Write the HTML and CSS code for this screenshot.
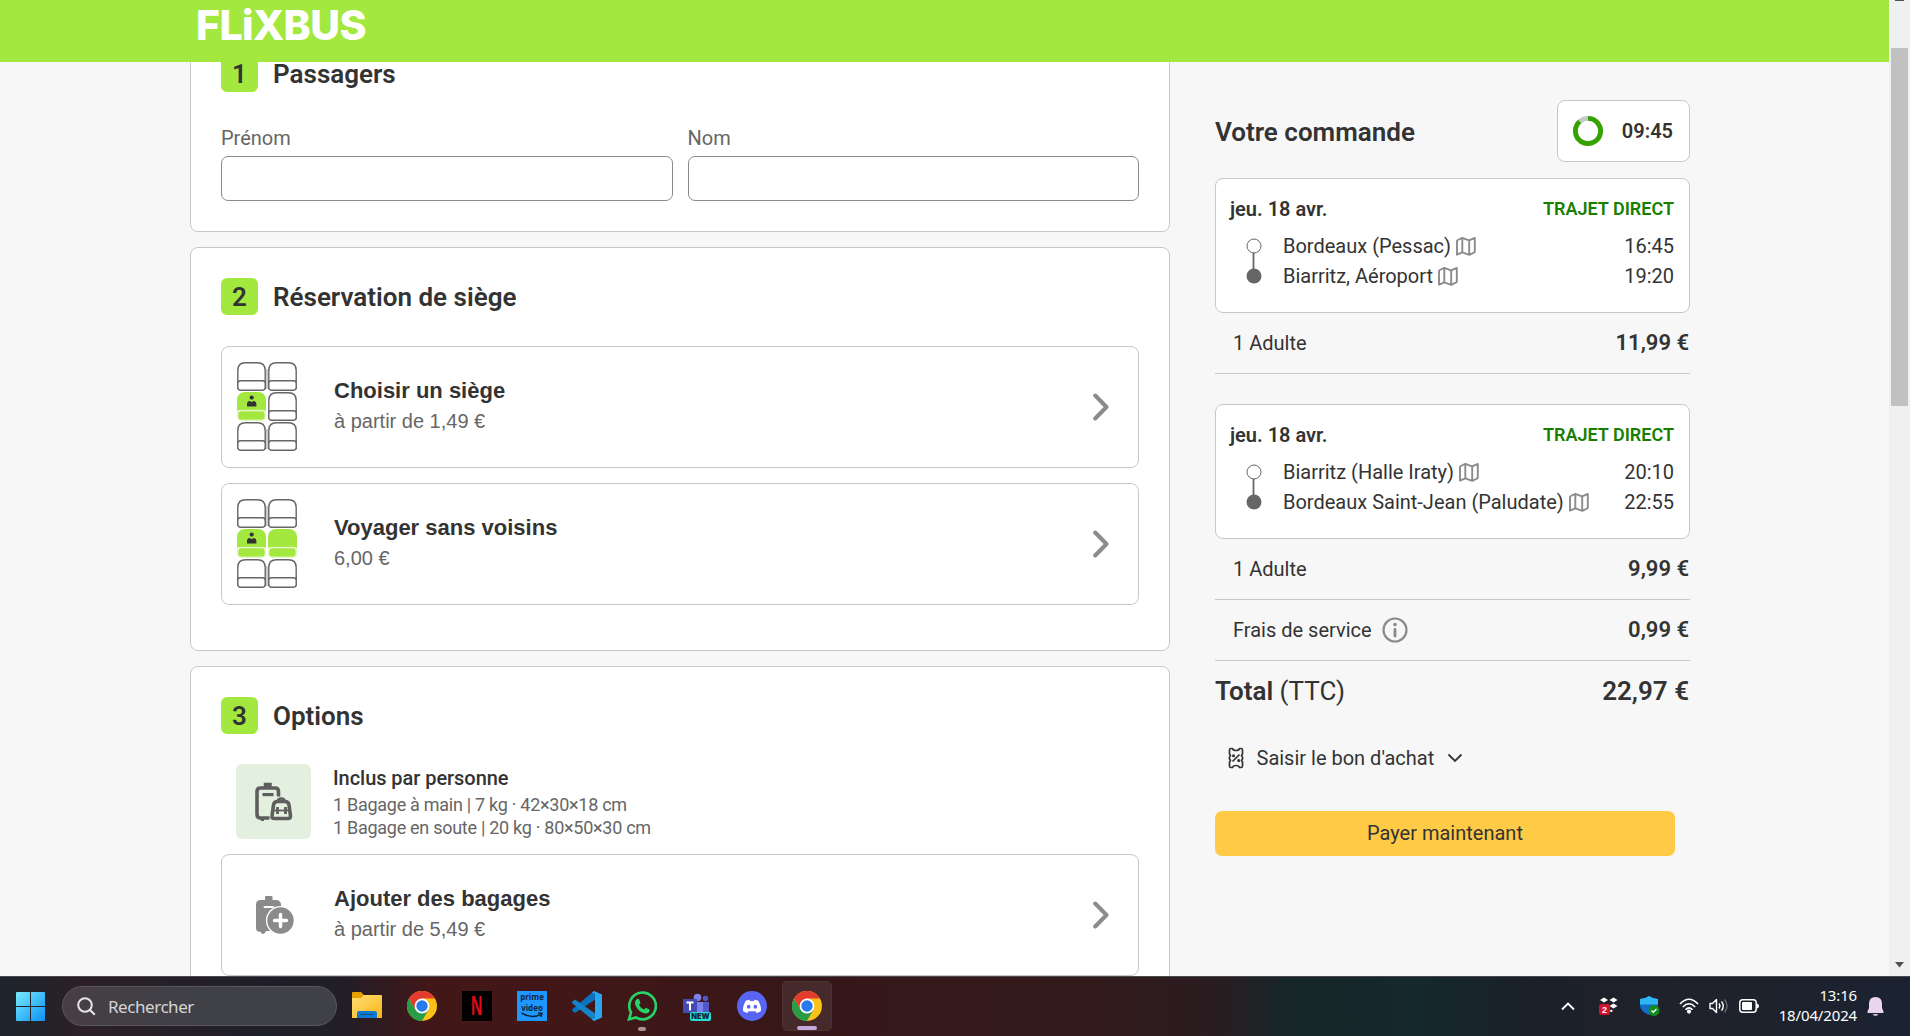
FILE: index.html
```html
<!DOCTYPE html>
<html lang="fr">
<head>
<meta charset="utf-8">
<title>FlixBus – Réservation</title>
<link rel="stylesheet" href="styles.css">
</head>
<body>
<svg class="defs" width="0" height="0" aria-hidden="true">
  <defs>
    <g id="seat" fill="#fff" stroke="#666" stroke-width="1.4">
      <path d="M.8 27V8.500Q.8.800 8.500.800H20.500Q28.200.800 28.200 8.500V27"/>
      <rect x=".8" y="18.800" width="27.400" height="9.400" rx="2.600"/>
    </g>
    <g id="seat-on">
      <path fill="#a3e83f" d="M0 20V8.500Q0 0 8.500 0H20.500Q29 0 29 8.500V20Q29 18 26 18H3Q0 18 0 20Z"/>
      <rect fill="#a3e83f" x="1.300" y="19.300" width="26.400" height="8.400" rx="2.600"/>
      <path fill="none" stroke="#d5f5a8" stroke-width=".8" d="M.5 24V21.500Q.5 18.300 3.500 18.300H25.500Q28.500 18.300 28.500 21.500V24Q28.500 28.300 25 28.300H4Q.5 28.300.5 24"/>
    </g>
    <g id="rider" fill="#333">
      <circle cx="14.700" cy="5.600" r="2.100"/>
      <path d="M10 14.500V12Q10 9.200 12.500 8.900L14.700 10L17 8.900Q19.400 9.200 19.400 12V14.500Z"/>
    </g>
    <g id="map" fill="none" stroke="#8b8b8b" stroke-width="1.900" stroke-linejoin="round">
      <path d="M1 17.700V4.200Q1 3.400 1.800 3L6.300.900L13 3.300L18.800 1V14.200Q18.800 15.200 18 15.500L13.300 17.900L6.300 15.300ZM6.300 1V15.300M13.200 3.300V17.800"/>
    </g>
    <g id="chrome">
      <circle cx="15" cy="15" r="15" fill="#fbc116"/>
      <path fill="#e33b2e" d="M2 7.500A15 15 0 0 1 28 7.500H15L8.500 19Z"/>
      <path fill="#2a9c48" d="M2 7.500A15 15 0 0 0 15 30L21.500 18.700L8.500 18.700Z"/>
      <circle cx="15" cy="15" r="7.400" fill="#fff"/>
      <circle cx="15" cy="15" r="5.700" fill="#2879ee"/>
    </g>
    <linearGradient id="win" x1="0" y1="0" x2="1" y2="1"><stop offset="0" stop-color="#7aeaff"/><stop offset="1" stop-color="#0a91f5"/></linearGradient>
    <linearGradient id="fold" x1="0" y1="0" x2="1" y2="1"><stop offset="0" stop-color="#ffdf75"/><stop offset="1" stop-color="#f8b517"/></linearGradient>
  </defs>
</svg>

<div class="browser">
  <div class="page">
    <header class="topbar"><span class="logo">FLiXBUS</span></header>
    <main class="layout">
      <div class="steps">
        <section class="card card-passengers">
          <h2 class="step-title"><span class="step-number">1</span>Passagers</h2>
          <div class="fields">
            <label class="field">Prénom<input class="field-input" type="text"></label>
            <label class="field">Nom<input class="field-input" type="text"></label>
          </div>
        </section>

        <section class="card card-seats">
          <h2 class="step-title"><span class="step-number">2</span>Réservation de siège</h2>
          <div class="option">
            <svg class="seats" width="60" height="90" viewBox="0 0 60 90">
              <rect x="29" y="7" width="2" height="20" fill="#ccc"/><rect x="29" y="67" width="2" height="20" fill="#ccc"/>
              <use href="#seat"/><use href="#seat" x="31"/>
              <use href="#seat-on" y="30"/><use href="#rider" y="30"/><use href="#seat" x="31" y="30"/>
              <use href="#seat" y="60"/><use href="#seat" x="31" y="60"/>
            </svg>
            <div class="option-text"><div class="option-name">Choisir un siège</div><div class="option-price">à partir de 1,49 €</div></div>
            <svg class="arrow" width="16" height="28" viewBox="0 0 16 28"><path d="M2.200 2.500L13.500 14L2.200 25.500"/></svg>
          </div>
          <div class="option">
            <svg class="seats" width="60" height="90" viewBox="0 0 60 90">
              <rect x="29" y="7" width="2" height="20" fill="#ccc"/><rect x="29" y="67" width="2" height="20" fill="#ccc"/>
              <use href="#seat"/><use href="#seat" x="31"/>
              <use href="#seat-on" y="30"/><use href="#rider" y="30"/><use href="#seat-on" x="31" y="30"/>
              <use href="#seat" y="60"/><use href="#seat" x="31" y="60"/>
            </svg>
            <div class="option-text"><div class="option-name">Voyager sans voisins</div><div class="option-price">6,00 €</div></div>
            <svg class="arrow" width="16" height="28" viewBox="0 0 16 28"><path d="M2.200 2.500L13.500 14L2.200 25.500"/></svg>
          </div>
        </section>

        <section class="card card-extras">
          <h2 class="step-title"><span class="step-number">3</span>Options</h2>
          <div class="included">
            <div class="included-icon">
              <svg width="40" height="40" viewBox="0 0 40 40" fill="none" stroke="#5e5e5e" stroke-width="3.600">
                <path d="M10.500 1.500H17V6H10.500Z" fill="#5e5e5e" stroke-width="1.500"/>
                <path d="M15.500 36H6.500Q3 36 3 32.500V9.500Q3 6 6.500 6H21Q24.500 6 24.500 9.500V14.500"/>
                <path d="M8.500 12.600H19.500" stroke-width="3.200"/><path d="M6 36H10V39H7Z" fill="#5e5e5e" stroke="none"/>
                <path d="M24 19Q24 16.500 27.200 16.500Q30.500 16.500 30.500 19" stroke-width="2.600"/>
                <path d="M19.500 23Q20 19.500 23.500 19.500H31Q34.500 19.500 35 23L36.500 34Q36.700 36.500 34 36.500H20.500Q17.500 36.500 18 34Z"/>
                <path d="M23.500 25V32M31.500 25V32" stroke-width="2.800"/><path d="M19 28.500H36" stroke-width="1.800"/>
              </svg>
            </div>
            <div class="included-text">
              <div class="included-title">Inclus par personne</div>
              <div>1 Bagage à main | 7 kg · 42×30×18 cm</div>
              <div>1 Bagage en soute | 20 kg · 80×50×30 cm</div>
            </div>
          </div>
          <div class="option">
            <div class="bag-slot">
              <svg width="40" height="40" viewBox="0 0 40 40">
                <path fill="#8b8b8b" d="M10 5V1.500Q10 1 11 1H16.500Q17.500 1 17.500 1.500V5H21Q25 5 26 9V12H1V9.500Q1 5 5.500 5ZM1 11H26V36H11Q10 39 8 39Q6 39 6 37Q1 37 1 33Z"/>
                <path stroke="#fff" stroke-width="2" stroke-linecap="round" d="M9.500 12H18" fill="none"/>
                <circle cx="25.500" cy="25.500" r="14.600" fill="#fff"/>
                <circle cx="25.500" cy="25.500" r="13.200" fill="#8b8b8b"/>
                <path d="M25.500 19.500V31.500M19.500 25.500H31.500" stroke="#fff" stroke-width="3.400" stroke-linecap="round"/>
              </svg>
            </div>
            <div class="option-text"><div class="option-name">Ajouter des bagages</div><div class="option-price">à partir de 5,49 €</div></div>
            <svg class="arrow" width="16" height="28" viewBox="0 0 16 28"><path d="M2.200 2.500L13.500 14L2.200 25.500"/></svg>
          </div>
        </section>
      </div>

      <aside class="order">
        <div class="order-head">
          <h2 class="order-title">Votre commande</h2>
          <div class="timer">
            <svg width="30" height="30" viewBox="0 0 30 30" fill="none" stroke-width="4.800"><circle cx="15" cy="15" r="12.600" stroke="#c8c8c8"/><path stroke="#34a300" d="M15 2.400A12.600 12.600 0 1 1 6.700 5.500"/></svg>
            <span>09:45</span>
          </div>
        </div>

        <div class="trip">
          <div class="trip-head"><span class="trip-date">jeu. 18 avr.</span><span class="trip-kind">TRAJET DIRECT</span></div>
          <div class="trip-body">
            <svg class="route" width="16" height="46" viewBox="0 0 16 46"><path d="M7.500 15V31" stroke="#666" stroke-width="1.800"/><circle cx="8" cy="8" r="7" fill="#fff" stroke="#666"/><circle cx="8" cy="38" r="7.500" fill="#666"/></svg>
            <div class="stops">
              <div class="stop"><span>Bordeaux (Pessac)</span><svg width="20" height="19"><use href="#map"/></svg><time>16:45</time></div>
              <div class="stop"><span>Biarritz, Aéroport</span><svg width="20" height="19"><use href="#map"/></svg><time>19:20</time></div>
            </div>
          </div>
        </div>
        <div class="fare"><span>1 Adulte</span><b>11,99 €</b></div>

        <div class="trip trip-return">
          <div class="trip-head"><span class="trip-date">jeu. 18 avr.</span><span class="trip-kind">TRAJET DIRECT</span></div>
          <div class="trip-body">
            <svg class="route" width="16" height="46" viewBox="0 0 16 46"><path d="M7.500 15V31" stroke="#666" stroke-width="1.800"/><circle cx="8" cy="8" r="7" fill="#fff" stroke="#666"/><circle cx="8" cy="38" r="7.500" fill="#666"/></svg>
            <div class="stops">
              <div class="stop"><span>Biarritz (Halle Iraty)</span><svg width="20" height="19"><use href="#map"/></svg><time>20:10</time></div>
              <div class="stop"><span>Bordeaux Saint-Jean (Paludate)</span><svg width="20" height="19"><use href="#map"/></svg><time>22:55</time></div>
            </div>
          </div>
        </div>
        <div class="fare"><span>1 Adulte</span><b>9,99 €</b></div>
        <div class="fare"><span>Frais de service</span>
          <svg class="info" width="26" height="26" viewBox="0 0 26 26"><circle cx="13" cy="13" r="11.500" fill="none" stroke="#8b8b8b" stroke-width="2.200"/><circle cx="13" cy="7.600" r="1.800" fill="#8b8b8b"/><path d="M13 12.500V19" stroke="#8b8b8b" stroke-width="2.800" stroke-linecap="round"/></svg>
          <b>0,99 €</b></div>
        <div class="total"><span><b>Total</b> (TTC)</span><b>22,97 €</b></div>
        <div class="voucher">
          <svg width="16" height="22" viewBox="0 0 16 22" fill="none" stroke="#333" stroke-width="1.700"><path stroke-linejoin="round" d="M1.500 3Q1.500 1.500 3 1.500H4.500Q5 3.500 8 3.500Q11 3.500 11.500 1.500H13Q14.500 1.500 14.500 3V7L13.500 8.500L14.500 10V12L13.500 13.500L14.500 15V19Q14.500 20.500 13 20.500H11.500Q11 18.500 8 18.500Q5 18.500 4.500 20.500H3Q1.500 20.500 1.500 19V15L2.500 13.500L1.500 12V10L2.500 8.500L1.500 7Z"/><path d="M4.500 14.500L11.500 7.500"/><circle cx="5.500" cy="8.800" r=".7"/><circle cx="10.700" cy="13.600" r=".7"/></svg>
          <span>Saisir le bon d'achat</span>
          <svg width="16" height="10" viewBox="0 0 16 10"><path d="M1.500 1.500L8 8L14.500 1.500" fill="none" stroke="#333" stroke-width="1.800"/></svg>
        </div>
        <button class="pay" type="button">Payer maintenant</button>
      </aside>
    </main>
  </div>
  <div class="scrollbar">
    <svg width="9" height="1"><rect width="9" height="1" fill="#505050"/></svg>
    <div class="thumb"></div>
    <svg width="9" height="6" viewBox="0 0 9 6"><path d="M0 0H9L4.500 5.500Z" fill="#505050"/></svg>
  </div>
</div>

<footer class="taskbar">
  <svg class="start" width="29" height="29" viewBox="0 0 29 29"><path fill="url(#win)" d="M1 0H14V14H0V1Q0 0 1 0ZM15 0H28Q29 0 29 1V14H15ZM0 15H14V29H1Q0 29 0 28ZM15 15H29V28Q29 29 28 29H15Z"/></svg>
  <div class="search">
    <svg width="19" height="19" viewBox="0 0 19 19" fill="none" stroke="#e8e6e8" stroke-width="2"><circle cx="8" cy="8" r="6.800"/><path d="M12.800 12.800L17.800 17.800"/></svg>
    <span>Rechercher</span>
  </div>
  <div class="apps">
    <div class="app"><svg width="30" height="28" viewBox="0 0 30 28"><path fill="#e5a000" d="M0 1Q0 0 1 0H9L12 3H20V10H0Z"/><path fill="url(#fold)" d="M0 6H9L12 3H29Q30 3 30 4V26H0Z"/><path fill="#0f78cf" d="M5 26V21Q5 19 7 19H23Q25 19 25 21V26Z"/><path stroke="#08529c" d="M8 22.500H22"/></svg></div>
    <div class="app"><svg width="30" height="30"><use href="#chrome"/></svg></div>
    <div class="app"><div class="netflix"><span>N</span></div></div>
    <div class="app"><div class="prime"><span>prime</span><span>video</span><svg width="22" height="7" viewBox="0 0 22 7"><path d="M.5 1Q10 7 20 2.500M17 1L21 1.500L20 5" fill="none" stroke="#10243b" stroke-width="1.500"/></svg></div></div>
    <div class="app"><svg width="30" height="30" viewBox="0 0 30 30"><path fill="#0b72bd" d="M22 0L24 8L3 22L0 19.500V18.500Z"/><path fill="#1583ca" d="M0 11L3 8.500L24 23L22 30L0 12Z"/><path fill="#2aa5f0" d="M22 0L30 3.500V26.500L22 30L20 28.500L23 27V3L20 1.500Z"/></svg></div>
    <div class="app"><svg width="30" height="30" viewBox="0 0 30 30"><path fill="none" stroke="#25d366" stroke-width="2.600" d="M2 28.300L4 21.500A13.300 13.300 0 1 1 9 26.500Z"/><path fill="#25d366" d="M10 8H12L13.500 12L12 14Q14 17.500 17 18.500L18.800 16.700L22.500 18.500Q23 22.500 18.500 22.500Q12 21.500 8.500 14.500Q7 10 10 8Z"/></svg><i class="dot"></i></div>
    <div class="app"><svg width="30" height="30" viewBox="0 0 30 30"><circle cx="15.500" cy="6.500" r="3.800" fill="#7b83eb"/><circle cx="23.500" cy="7.500" r="2.700" fill="#5059c9"/><path fill="#7b83eb" d="M12 11H21V23H12Z"/><path fill="#5059c9" d="M21 11H27V22H21Z"/><rect x="1" y="8" width="14" height="14" fill="#444cb4"/><path d="M4.500 11.500H11.500M8 11.500V19.500" stroke="#fff" stroke-width="2"/><rect x="8" y="21" width="21" height="9" rx="2" fill="#27e0d0"/><text class="new" x="18.500" y="28.400" text-anchor="middle">NEW</text></svg></div>
    <div class="app"><svg width="30" height="30" viewBox="0 0 30 30"><circle cx="15" cy="15" r="15" fill="#5865f2"/><path fill="#fff" d="M9 9.500L12.500 8.700L13.200 10H16.800L17.500 8.700L21 9.500Q24.500 15 24 20Q22 21.500 19.500 22L18.500 20.300H11.500L10.500 22Q8 21.500 6 20Q5.500 15 9 9.500Z"/><ellipse cx="11.700" cy="15.800" rx="1.800" ry="2" fill="#5865f2"/><ellipse cx="18.300" cy="15.800" rx="1.800" ry="2" fill="#5865f2"/></svg></div>
    <div class="app app-active"><svg width="30" height="30"><use href="#chrome"/></svg><i class="dot dot-active"></i></div>
  </div>
  <div class="tray">
    <svg width="14" height="9" viewBox="0 0 14 9"><path d="M1 7.500L7 1.500L13 7.500" fill="none" stroke="#fff" stroke-width="1.800"/></svg>
    <svg class="tray-dropbox" width="19" height="18" viewBox="0 0 19 18"><path fill="#fff" d="M1 3L5 .5L9 3L5 5.500ZM10.500 3L14.500.5L18.500 3L14.500 5.500ZM10.500 9L14.500 6.500L18.500 9L14.500 11.500ZM10 14L12.500 12.500L14 14L12.500 15Z"/><rect y="7" width="11" height="11" rx="2.500" fill="#d5122e"/><text class="badge" x="5.500" y="15.600" text-anchor="middle">2</text></svg>
    <svg class="tray-shield" width="20" height="20" viewBox="0 0 20 20"><path fill="#0f6fca" d="M0 3Q5 3 9 0Q13 3 18 3V9Q18 15 9 19Q0 15 0 9Z"/><path fill="#31b6f5" d="M0 3Q5 3 9 0Q13 3 18 3V8.500H0Z"/><circle cx="14" cy="14.500" r="5.500" fill="#128a1c"/><path d="M11.500 14.500L13.300 16.300L16.500 13" fill="none" stroke="#fff" stroke-width="1.300"/></svg>
    <svg class="tray-wifi" width="20" height="16" viewBox="0 0 20 16" fill="none" stroke="#fff" stroke-width="1.600"><path d="M1 6Q10-3.500 19 6M3.800 9Q10 2.500 16.200 9M6.500 11.800Q10 8 13.500 11.800"/><circle cx="10" cy="13.600" r="1.300" fill="#fff"/></svg>
    <svg class="tray-sound" width="20" height="16" viewBox="0 0 20 16" fill="none" stroke="#fff" stroke-width="1.400"><path stroke-linejoin="round" d="M1 5.500H3.500L7.500 1.500V14.500L3.500 10.500H1Z"/><path d="M10 5.500Q11.800 8 10 10.500M12.500 3.300Q16 8 12.500 12.700"/><path stroke="#666870" d="M15.500 1.500Q20.500 8 15.500 14.500"/></svg>
    <svg class="tray-battery" width="20" height="14" viewBox="0 0 20 14"><rect x=".8" y=".8" width="16.400" height="12.400" rx="3" fill="none" stroke="#fff" stroke-width="1.500"/><rect x="3" y="3" width="10" height="8" rx="1" fill="#fff"/><path d="M18 4.500Q20 5 20 7Q20 9 18 9.500Z" fill="#fff"/></svg>
    <div class="clock"><div>13:16</div><div>18/04/2024</div></div>
    <svg class="tray-bell" width="17" height="19" viewBox="0 0 17 19"><path fill="#ead5f0" d="M2 7Q2 0 8.500 0Q15 0 15 7V11L16.500 14.500Q17 16 15.500 16H1.500Q0 16 .5 14.500L2 11Z"/><path fill="#cfb8d8" d="M5.500 17H11.500Q10.500 19 8.500 19Q6.500 19 5.500 17Z"/></svg>
  </div>
</footer>
</body>
</html>
```
FILE: styles.css
```css
* { box-sizing: border-box; }
body {
  margin: 0;
  height: 1036px;
  overflow: hidden;
  display: flex;
  flex-direction: column;
  background: #f7f7f7;
  color: #333;
  font: 20px/30px Roboto, sans-serif;
}
h2 { margin: 0; font-weight: 600; font-size: 26px; }
b { font-weight: 600; }
svg { display: block; flex: none; }
.defs { position: absolute; }

.browser { display: flex; height: 976px; }
.page { flex: 1; overflow: hidden; }
.topbar { position: relative; z-index: 1; height: 62px; padding: 0 196px; background: #a3e83f; }
.logo { display: block; font: 800 41px/50px Inter, sans-serif; letter-spacing: -.6px; color: #fff; }

.scrollbar { width: 21px; background: #f0f0f0; display: flex; flex-direction: column; align-items: center; padding-bottom: 8px; }
.thumb { width: 17px; height: 358px; margin: 47px 0 auto; background: #c1c1c1; }

.layout { display: flex; gap: 45px; padding-left: 190px; }
.steps { width: 980px; margin-top: -37px; display: flex; flex-direction: column; gap: 15px; }
.card { background: #fff; border: 1px solid #c8c8c8; border-radius: 8px; padding: 30px; }
.card-passengers { height: 207px; padding-top: 29px; }
.card-seats { height: 404px; }
.card-extras { height: 360px; }

.step-title { display: flex; align-items: flex-start; gap: 15px; line-height: 38px; height: 38px; }
.step-number { width: 37px; height: 37px; border-radius: 6px; background: #a3e83f; text-align: center; line-height: 38px; }

.fields { display: flex; gap: 15px; margin-top: 29px; }
.field { flex: 1; color: #666; line-height: 32px; }
.field-input { display: block; width: 100%; height: 45px; margin-top: 2px; border: 1px solid #8b8b8b; border-radius: 7px; background: #fff; }

.option { display: flex; align-items: center; height: 122px; margin-bottom: 15px; border: 1px solid #c8c8c8; border-radius: 8px; padding: 0 29px 0 15px; }
.card-seats .step-title { margin-bottom: 30px; }
.option-text { margin: -1px 0 1px 37px; flex: 1; font-family: "Liberation Sans", sans-serif; }
.option-name { font-size: 22px; font-weight: bold; }
.option-price { color: #666; }
.arrow { margin-top: -1px; fill: none; stroke: #8b8b8b; stroke-width: 4; stroke-linecap: round; stroke-linejoin: round; }
.bag-slot { width: 60px; padding-left: 18px; }

.included { display: flex; gap: 22px; margin: 29px 0 15px 15px; }
.included-icon { width: 75px; height: 75px; border-radius: 6px; background: #e4f0df; display: grid; place-items: center; }
.included-text { font-size: 18px; letter-spacing: -.28px; line-height: 23px; color: #666; }
.included-title { font-size: 20px; letter-spacing: -.05px; line-height: 29px; font-weight: 500; color: #333; }

.order { width: 475px; padding-top: 38px; }
.order-head { display: flex; justify-content: space-between; align-items: center; height: 62px; }
.order-title { padding-top: 1px; }
.timer { display: flex; align-items: center; justify-content: space-between; width: 133px; height: 62px; padding: 0 16px 0 15px; background: #fff; border: 1px solid #c8c8c8; border-radius: 8px; font-weight: 600; }
.trip { margin-top: 16px; height: 135px; background: #fff; border: 1px solid #c8c8c8; border-radius: 8px; padding: 15px 15px 0 14px; }
.trip-return { margin-top: 30px; }
.trip-head { display: flex; justify-content: space-between; font-weight: 600; }
.trip-kind { font-size: 18px; color: #178000; }
.trip-body { display: flex; gap: 21px; margin: 7px 0 0 16px; }
.route { margin-top: 7px; }
.stops { flex: 1; }
.stop { display: flex; align-items: center; gap: 5px; height: 30px; }
.stop time { margin-left: auto; }
.fare { display: flex; align-items: center; height: 61px; padding: 0 1px 0 18px; border-bottom: 1px solid #c8c8c8; }
.fare b { margin-left: auto; font-size: 22px; }
.info { margin-left: 10px; }
.total { display: flex; justify-content: space-between; padding-right: 1px; font-size: 26px; line-height: 60px; }
.voucher { display: flex; align-items: center; gap: 12.500px; height: 30px; margin: 22px 0 0 13px; }
.pay { display: block; width: 460px; height: 45px; margin-top: 38px; border: 0; border-radius: 7px; background: #ffca46; color: #333; font: 20px/45px Roboto, sans-serif; padding: 0; }

.taskbar {
  display: flex;
  align-items: center;
  height: 60px;
  padding: 0 16px 1px;
  border-top: 1px solid #4a4a4e;
  background: linear-gradient(90deg, #1d252d 0, #2c2026 80px, #1f1f29 260px, #211e27 340px, #421718 430px, #431717 540px, #371719 800px, #331a1b 1080px, #2a1c20 1210px, #172628 1290px, #15282d 1420px, #1b2029 1530px, #20222b 1650px, #1b2230 1910px);
  color: #fff;
}
.search { display: flex; align-items: center; gap: 12px; width: 275px; height: 40px; margin-left: 17px; padding-left: 14px; border-radius: 20px; border: 1px solid #5a575c; background: linear-gradient(90deg, #463f44, #3f4046 50%, #404147); color: #d6d3d6; font: 17px "Noto Sans", sans-serif; letter-spacing: -.45px; }
.apps { display: flex; margin-left: 5px; }
.app { position: relative; width: 50px; height: 50px; margin-right: 5px; display: grid; place-items: center; border-radius: 5px; }
.app-active { background: #46292b; border: 1px solid #4e3335; }
.dot { position: absolute; left: 21px; bottom: 0; width: 8px; height: 4px; border-radius: 2px; background: #a89295; }
.dot-active { left: 14px; width: 20px; background: #c4a8dc; }
.netflix { width: 30px; height: 30px; background: #000; color: #e50914; font: bold 27px/30px "Liberation Sans", sans-serif; text-align: center; }
.netflix span { display: inline-block; transform: scaleX(.58); margin: 0 -5px; }
.prime { width: 30px; height: 30px; background: #1e98ff; color: #10243b; font: bold 8px/11px "Open Sans", sans-serif; display: flex; flex-direction: column; align-items: center; }
.prime svg { margin-top: -1px; }
.new { font: 900 7.500px Inter, sans-serif; fill: #10243b; }
.badge { font: bold 9px "Liberation Sans", sans-serif; fill: #fff; }
.tray { display: flex; align-items: center; margin-left: auto; }
.tray-dropbox { margin-left: 24px; }
.tray-shield { margin-left: 22px; }
.tray-wifi { margin-left: 19px; }
.tray-sound { margin-left: 10px; }
.tray-battery { margin-left: 10px; }
.clock { width: 98px; margin-top: -2px; text-align: right; font: 15px/20px "Noto Sans", sans-serif; letter-spacing: -.15px; }
.tray-bell { margin: 0 10px; }
```
